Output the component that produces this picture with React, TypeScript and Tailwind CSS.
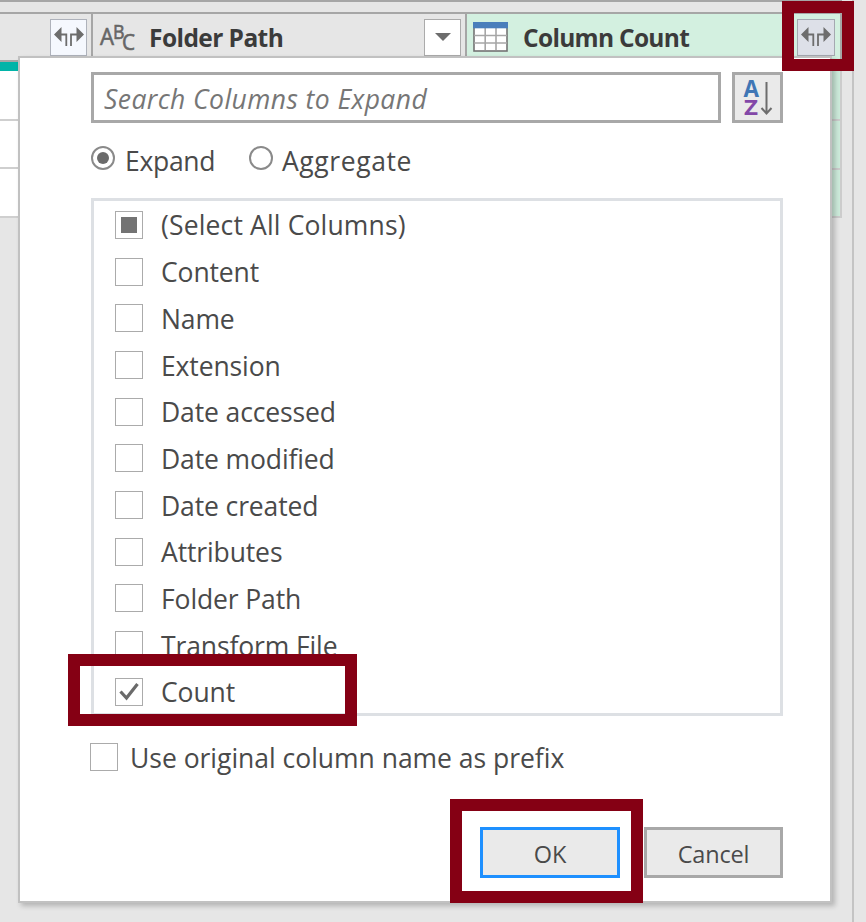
import { useState } from "react";

const columns = [
  "Content",
  "Name",
  "Extension",
  "Date accessed",
  "Date modified",
  "Date created",
  "Attributes",
  "Folder Path",
  "Transform File",
  "Count",
];

type CheckState = "on" | "off" | "mixed";

function CheckBox({ state }: { state: CheckState }) {
  return (
    <span className="flex size-[28px] shrink-0 items-center justify-center border-[1.5px] border-[#ababab] bg-white">
      {state === "mixed" && <span className="size-4 bg-[#737373]" />}
      {state === "on" && (
        <svg viewBox="0 0 24 24" className="size-6" fill="none" stroke="#6a6a6a" strokeWidth="3.2">
          <path d="M3.5 11.5 L9.5 18 L20.5 4" />
        </svg>
      )}
    </span>
  );
}

function Radio({ checked }: { checked: boolean }) {
  return (
    <span className="flex size-6 items-center justify-center rounded-full border-2 border-[#8a8a8a] bg-white">
      {checked && <span className="size-3 rounded-full bg-[#6b6b6b]" />}
    </span>
  );
}

function ExpandIcon() {
  return (
    <svg viewBox="0 0 34 22" className="h-[22px] w-[34px] shrink-0" fill="none" stroke="#6d6d6d" strokeWidth="1.8">
      <path d="M8 8.5 H14.3 V20 M26 8.5 H19 V20" />
      <path d="M9.5 1 L2 8.5 L9.5 16 Z M24.5 1 L32 8.5 L24.5 16 Z" fill="#6d6d6d" stroke="none" />
    </svg>
  );
}

function TableIcon() {
  return (
    <svg viewBox="0 0 35 30" className="h-[30px] w-[35px]" fill="none">
      <rect x="1" y="1" width="33" height="28" fill="#fff" stroke="#737373" strokeWidth="1.6" />
      <path d="M12.2 6 V28 M23 6 V28 M1 13.5 H34 M1 21 H34" stroke="#a6a6a6" strokeWidth="1.6" />
      <rect x="0" y="0" width="35" height="6.3" fill="#4a7ebb" />
    </svg>
  );
}

function TextTypeIcon() {
  return (
    <svg viewBox="0 0 36 30" className="h-[30px] w-9 overflow-visible" fill="#666" stroke="#666" strokeWidth="0.6">
      <text x="0" y="23" fontSize="24" textLength="14" lengthAdjust="spacingAndGlyphs">A</text>
      <text x="13" y="17" fontSize="19.5" textLength="11.5" lengthAdjust="spacingAndGlyphs">B</text>
      <text x="22" y="28" fontSize="21" textLength="13" lengthAdjust="spacingAndGlyphs">C</text>
    </svg>
  );
}

function SortIcon() {
  return (
    <svg viewBox="0 0 32 38" className="h-[38px] w-8 shrink-0 overflow-visible" fontSize="23" fontWeight="700">
      <text x="1.5" y="18" fill="#3f76b5" textLength="15.5" lengthAdjust="spacingAndGlyphs">A</text>
      <text x="2" y="35.5" fill="#8348a8" fontSize="21.5" textLength="14" lengthAdjust="spacingAndGlyphs">Z</text>
      <path d="M24.5 3 V35 M19.5 29 L24.5 34.5 L29.5 29" fill="none" stroke="#6d6d6d" strokeWidth="2" />
    </svg>
  );
}

function GridBackdrop() {
  return (
    <div className="flex h-full">
      <div className="flex w-[842px] flex-col">
        <div className="h-[14px] border-y-2 border-[#a6a6a6] bg-[#e6e6e6]" />
        <div className="flex h-[46px] items-center text-[24.5px] font-bold text-[#3b3b3b]">
          <div className="flex w-[91px] items-center justify-end pr-1">
            <span className="flex h-[37px] w-[37px] items-center justify-center border-[1.5px] border-[#aeb2bb] bg-[#f5f8fe]">
              <ExpandIcon />
            </span>
          </div>
          <div className="flex h-full w-[374px] items-center border-l-[2.5px] border-[#a6a6a6] pr-1 pl-[7px]">
            <span className="w-9 font-normal">
              <TextTypeIcon />
            </span>
            <span className="ml-[13px] pt-[2px] tracking-[-0.57px] whitespace-nowrap">Folder Path</span>
            <span className="ml-auto flex size-[37px] items-center justify-center border-[1.5px] border-[#ababab] bg-white">
              <svg viewBox="0 0 16 8" className="h-2 w-4">
                <path d="M0 0 H16 L8 8 Z" fill="#6d6d6d" />
              </svg>
            </span>
          </div>
          <div className="flex h-full flex-1 items-center border-x-[2.5px] border-[#a6a6a6] bg-[#d3f0e0] pr-[5px] pl-[6px]">
            <TableIcon />
            <span className="ml-[15px] pt-[2px] tracking-[-0.7px] whitespace-nowrap">Column Count</span>
            <span className="ml-auto flex h-[37px] w-[38px] items-center justify-center border-[1.5px] border-[#a5a9b1] bg-[#dde0e8]">
              <ExpandIcon />
            </span>
          </div>
        </div>
        <div className="flex h-[158px] justify-between border-t-2 border-[#a6a6a6]">
          <div className="flex w-[30px] flex-col bg-white">
            <div className="h-[9px] bg-[#01b4a8]" />
            <div className="h-[50px] border-b-2 border-[#cfcfcf]" />
            <div className="h-[48px] border-b-2 border-[#cfcfcf]" />
            <div className="flex-1 border-b-2 border-[#cfcfcf]" />
          </div>
          <div className="flex w-[30px] flex-col border-r-2 border-[#cccccc] bg-[#cdebdb]">
            <div className="h-[59px] border-b-2 border-[#cccccc]" />
            <div className="h-[49px] border-b-2 border-[#cccccc]" />
            <div className="flex-1 border-b-2 border-[#cccccc]" />
          </div>
        </div>
      </div>
      <div className="w-[12px] border-r-2 border-[#c4c4c4]" />
    </div>
  );
}

export default function App() {
  const [mode, setMode] = useState<"expand" | "aggregate">("expand");
  const [selected, setSelected] = useState<Set<string>>(new Set(["Count"]));
  const [prefix, setPrefix] = useState(false);

  const toggle = (name: string) => {
    setSelected(prev => {
      const next = new Set(prev);
      next.has(name) ? next.delete(name) : next.add(name);
      return next;
    });
  };

  const toggleAll = () => {
    setSelected(prev => (prev.size === columns.length ? new Set() : new Set(columns)));
  };

  const allState: CheckState = selected.size === 0 ? "off" : selected.size === columns.length ? "on" : "mixed";

  return (
    <div className="relative h-[922px] w-[866px] overflow-hidden bg-[#e6e6e6] font-['Open_Sans',sans-serif] text-[#4a4a4a]">
      <GridBackdrop />

      <div className="absolute top-[56px] left-[18px] flex h-[847px] w-[814px] flex-col border-[2px] border-[#c1c1c1] bg-white pr-[47px] pl-[71px] text-[26.5px] shadow-[3px_3px_5px_rgba(0,0,0,0.22)]">
        <div className="mt-[14px] flex justify-between">
          <input
            placeholder="Search Columns to Expand"
            className="h-[51px] w-[630px] border-[3px] border-[#a8a8a8] bg-white pt-[2px] pl-[10px] text-[26.5px] tracking-[0.42px] italic outline-none placeholder:text-[#767676]"
          />
          <button className="flex h-[51px] w-[51px] items-center justify-center border-[3px] border-[#a8a8a8] bg-[#eaeaea]">
            <SortIcon />
          </button>
        </div>

        <div className="mt-[21px] flex h-[34px]">
          <button onClick={() => setMode("expand")} className="flex w-[158px] items-start">
            <span className="pt-[2px]"><Radio checked={mode === "expand"} /></span>
            <span className="ml-[10px] leading-[35px] tracking-[-0.3px]">Expand</span>
          </button>
          <button onClick={() => setMode("aggregate")} className="flex items-start">
            <span className="pt-[2px]"><Radio checked={mode === "aggregate"} /></span>
            <span className="ml-[9px] leading-[35px] tracking-[0.6px]">Aggregate</span>
          </button>
        </div>

        <div className="mt-[20px] flex h-[518px] w-[692px] flex-col border-[3px] border-[#dde0e4] pt-[0.5px] pl-[21px]">
          <button onClick={toggleAll} className="flex h-[46.7px] shrink-0 items-center gap-[18px]">
            <CheckBox state={allState} />
            <span className="pt-[3px] tracking-[0.15px]">(Select All Columns)</span>
          </button>
          {columns.map(name => (
            <button key={name} onClick={() => toggle(name)} className="flex h-[46.7px] shrink-0 items-center gap-[18px]">
              <CheckBox state={selected.has(name) ? "on" : "off"} />
              <span className="pt-[3px] tracking-[-0.12px]">{name}</span>
            </button>
          ))}
        </div>

        <button onClick={() => setPrefix(!prefix)} className="mt-[21px] -ml-px flex h-[40px] items-center gap-[12px]">
          <CheckBox state={prefix ? "on" : "off"} />
          <span className="pt-[3px] tracking-[-0.02px] whitespace-nowrap">Use original column name as prefix</span>
        </button>

        <div className="mt-[50px] flex justify-end gap-[24px] text-[23.5px] tracking-[-0.2px]">
          <button className="h-[51px] w-[140px] border-[3px] border-[#1e90ff] bg-[#eaeaea] pt-[4px]">OK</button>
          <button className="h-[51px] w-[139px] border-[3px] border-[#a8a8a8] bg-[#eaeaea] pt-[4px]">Cancel</button>
        </div>
      </div>

      {/* callout frames */}
      <div className="pointer-events-none absolute top-[1px] left-[782px] h-[70px] w-[72px] border-[12px] border-[#850014]" />
      <div className="pointer-events-none absolute top-[654px] left-[68px] h-[72px] w-[289px] border-[12px] border-[#850014]" />
      <div className="pointer-events-none absolute top-[799px] left-[450px] h-[104px] w-[193px] border-[12px] border-[#850014]" />
    </div>
  );
}
